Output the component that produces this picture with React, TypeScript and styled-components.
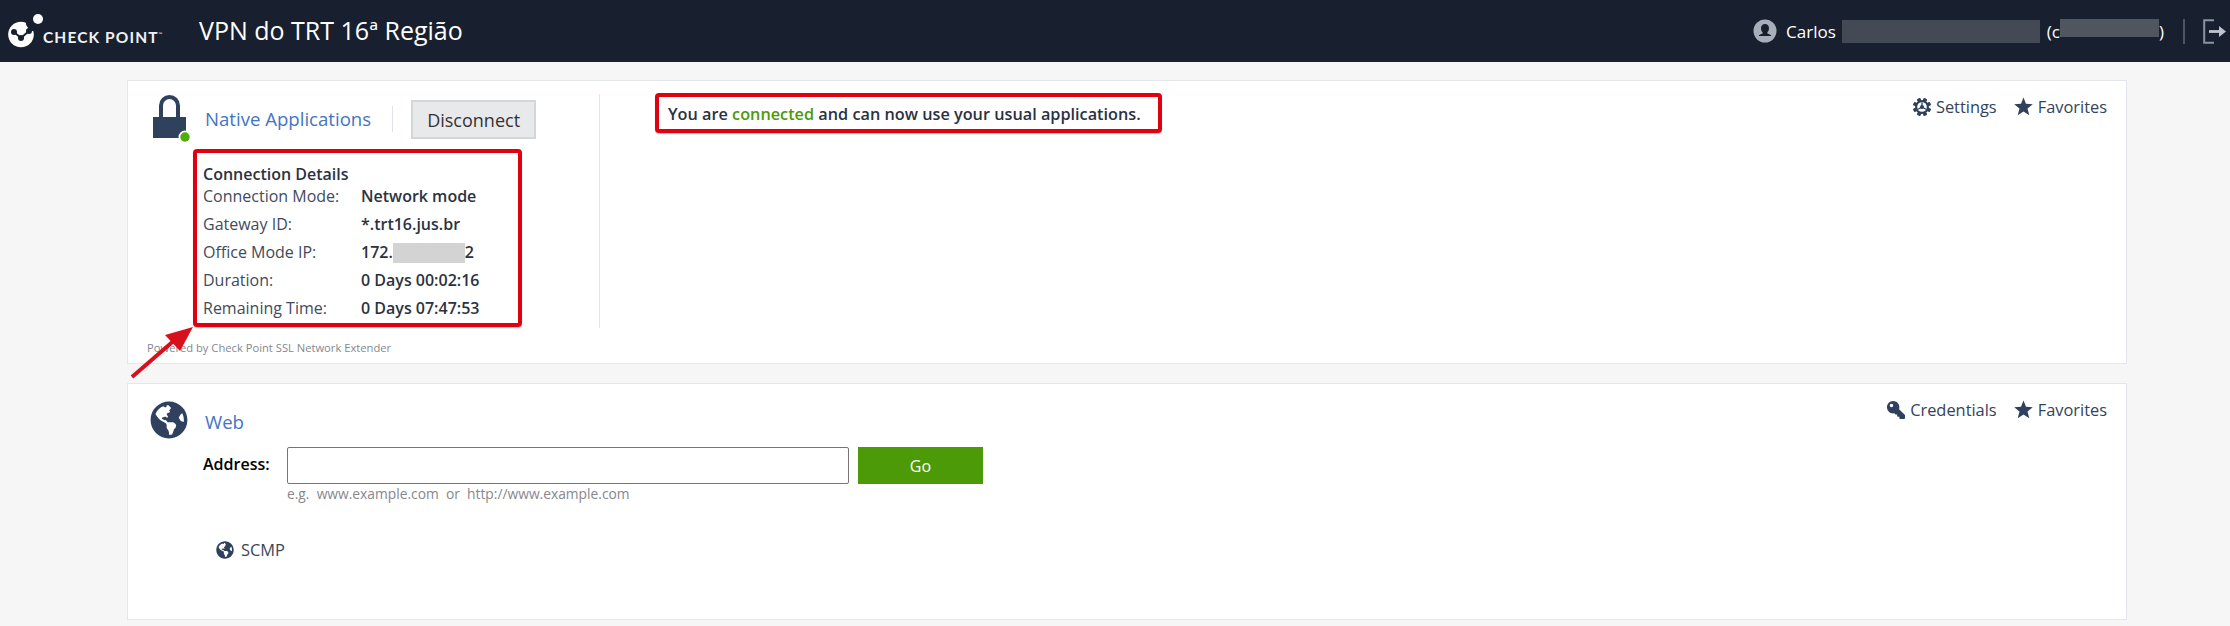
import React from "react";
import styled, { createGlobalStyle } from "styled-components";
import { FaGlobeAmericas, FaKey } from "react-icons/fa";

const Global = createGlobalStyle`
  html, body { margin: 0; padding: 0; background: #f6f6f6; }
  body { font-family: "Open Sans", "Liberation Sans", sans-serif; color: #2b3240; }
  * { box-sizing: border-box; }
`;

const Page = styled.div`
  width: 2230px;
  height: 626px;
  overflow: hidden;
  position: relative;
  background: #f6f6f6;
`;

const Header = styled.header`
  height: 62px;
  background: #18202f;
  display: flex;
  align-items: center;
  padding: 0 4px 0 8px;
  color: #fff;
`;

const Brand = styled.div`
  display: flex;
  align-items: center;
  width: 191px;
`;

const BrandName = styled.span`
  font-family: "Lato", "Open Sans", sans-serif;
  font-weight: 700;
  font-size: 15.5px;
  letter-spacing: 1.1px;
  margin: 11px 0 0 -1px;
  color: #f2f2f2;
  white-space: nowrap;
`;

const BrandMark = styled.sup`
  font-size: 5px;
  font-weight: 400;
  letter-spacing: 0;
  vertical-align: 7px;
  line-height: 0;
`;

const Title = styled.h1`
  margin: 0 auto 2px 0;
  font-size: 25px;
  font-weight: 400;
  white-space: nowrap;
`;

const User = styled.div`
  display: flex;
  align-items: center;
  font-size: 17px;
  white-space: nowrap;
`;

const UserName = styled.span`
  margin-left: 9px;
`;

const Paren = styled.span<{ $ml?: number }>`
  margin-left: ${(p) => p.$ml ?? 0}px;
`;

const Smudge = styled.span<{ $w: number; $h: number; $up?: number; $ml?: number; $bg: string }>`
  display: inline-block;
  width: ${(p) => p.$w}px;
  height: ${(p) => p.$h}px;
  background: ${(p) => p.$bg};
  vertical-align: middle;
  margin-top: ${(p) => -(p.$up ?? 0)}px;
  margin-left: ${(p) => p.$ml ?? 0}px;
`;

const HeaderSep = styled.span`
  width: 2px;
  height: 25px;
  background: #4d5563;
  margin: 0 18px 0 19px;
`;

const Main = styled.main`
  padding: 18px 103px 0 127px;
  display: flex;
  flex-direction: column;
  gap: 19px;
`;

const Card = styled.section<{ $h: number }>`
  height: ${(p) => p.$h}px;
  background: #fff;
  border: 1px solid #e3e6ec;
  display: flex;
  position: relative;
`;

const LeftColumn = styled.div`
  width: 472px;
  padding: 14px 0 0 24px;
  display: flex;
  flex-direction: column;
`;

const TitleRow = styled.div`
  display: flex;
  align-items: flex-start;
  height: 54px;
`;

const LockWrap = styled.div`
  width: 53px;
  flex: none;
`;

const SectionName = styled.h2`
  margin: 0;
  font-size: 18.6px;
  font-weight: 400;
  color: #4474c4;
  line-height: 24px;
  white-space: nowrap;
`;

const NativeName = styled(SectionName)`
  margin-top: 12px;
  padding-right: 21px;
`;

const TitleSep = styled.span`
  width: 1px;
  height: 26px;
  margin: 11px 18px 0 0;
  background: #dfe2e7;
`;

const Disconnect = styled.button`
  width: 125px;
  height: 39px;
  margin-top: 5px;
  background: #e8e9eb;
  border: 2px solid #d3d6db;
  font: 400 18px "Open Sans", sans-serif;
  color: #333;
  padding: 0;
`;

const DetailsBox = styled.div`
  width: 329px;
  height: 178px;
  margin-left: 41px;
  border: 4px solid #e0000f;
  border-radius: 4px;
  padding: 11px 0 0 6px;
  box-shadow: 0 1px 1px rgba(0, 0, 0, 0.25);
`;

const DetailsTitle = styled.div`
  font-size: 16px;
  font-weight: 600;
  line-height: 20px;
  color: #2b3240;
`;

const DetailRow = styled.div`
  display: grid;
  grid-template-columns: 158px auto;
  height: 28px;
  align-items: center;
  font-size: 16px;
  white-space: nowrap;
`;

const DetailsGrid = styled.div`
  display: flex;
  flex-direction: column;
  margin-top: -2px;
`;

const DetailLabel = styled.span`
  color: #414b5c;
`;

const DetailValue = styled.span`
  font-weight: 600;
  color: #2b3240;
`;

const Powered = styled.div`
  font-size: 11.2px;
  color: #85888e;
  margin: 13px 0 0 -5px;
  line-height: 15px;
  white-space: nowrap;
`;

const VSep = styled.div`
  position: absolute;
  left: 471px;
  top: 13px;
  width: 1px;
  height: 234px;
  background: #e3e6ec;
`;

const StatusColumn = styled.div`
  flex: 1;
  padding: 12px 0 0 55px;
`;

const StatusBox = styled.div`
  display: inline-block;
  width: 507px;
  height: 40px;
  border: 4px solid #e0000f;
  border-radius: 4px;
  padding: 0 0 0 9px;
  line-height: 34px;
  font-size: 16.25px;
  font-weight: 600;
  color: #2b3240;
  white-space: nowrap;
  box-shadow: 0 1px 1px rgba(0, 0, 0, 0.25);
`;

const Connected = styled.span`
  color: #4c9a08;
`;

const Actions = styled.div`
  display: flex;
  gap: 17px;
  padding: 12px 19px 0 0;
  height: 39px;
  align-items: center;
  font-size: 16.4px;
  color: #34435c;
  white-space: nowrap;
`;

const Action = styled.span`
  display: flex;
  align-items: center;
  gap: 5px;
  svg { color: #2f415c; flex: none; }
`;

const FlippedKey = styled(FaKey)`
  transform: scaleX(-1);
`;

const WebBody = styled.div`
  flex: 1;
  padding: 17px 0 0 22px;
  display: flex;
  flex-direction: column;
`;

const WebTitleRow = styled.div`
  display: flex;
  align-items: flex-start;
  height: 46px;
`;

const WebIcon = styled.div`
  width: 55px;
  color: #2f415c;
  flex: none;
`;

const WebName = styled(SectionName)`
  margin-top: 9px;
`;

const AddressRow = styled.div`
  display: flex;
  align-items: center;
  padding-left: 53px;
`;

const AddressLabel = styled.label`
  width: 84px;
  padding-bottom: 3px;
  font-size: 16px;
  font-weight: 600;
  color: #000;
`;

const AddressInput = styled.input`
  width: 562px;
  height: 37px;
  border: 1px solid #767676;
  border-radius: 2px;
  background: #fff;
`;

const Go = styled.button`
  width: 125px;
  height: 37px;
  margin-left: 9px;
  background: #4c9a08;
  border: 0;
  color: #fff;
  font: 400 16px "Open Sans", sans-serif;
`;

const Hint = styled.div`
  margin: 1px 0 0 137px;
  font-size: 13.8px;
  line-height: 18px;
  color: #85888e;
  white-space: pre;
`;

const Bookmark = styled.div`
  display: flex;
  align-items: center;
  gap: 7px;
  margin: 35px 0 0 66px;
  font-size: 16.4px;
  color: #3c4656;
  svg { color: #2f415c; }
`;

const Arrow = styled.svg`
  position: absolute;
  left: 125px;
  top: 320px;
`;

const Logo = () => (
  <svg width="36" height="36" viewBox="0 0 36 36" aria-hidden>
    <circle cx="13" cy="21.500" r="12.800" fill="#fff" />
    <circle cx="27.500" cy="8.500" r="10" fill="#18202f" />
    <circle cx="30" cy="6" r="5" fill="#fff" />
    <path d="M6 19l7 6 8-7" fill="none" stroke="#18202f" strokeWidth="2" />
    <circle cx="6" cy="19" r="3" fill="#18202f" />
    <circle cx="13" cy="25" r="3" fill="#18202f" />
    <circle cx="21" cy="18" r="3" fill="#18202f" />
  </svg>
);

const Lock = () => (
  <svg width="38" height="48" viewBox="0 0 38 48" aria-hidden>
    <path d="M9 24V10.500a8.500 8.500 0 0 1 17 0V24" fill="none" stroke="#2f415c" strokeWidth="4" />
    <rect x="1" y="22" width="33" height="21" fill="#2f415c" />
    <circle cx="33" cy="42" r="6.500" fill="#fff" />
    <circle cx="33" cy="42" r="4.700" fill="#4fae0c" />
  </svg>
);

const Avatar = () => (
  <svg width="24" height="24" viewBox="0 0 24 24" aria-hidden>
    <circle cx="12" cy="12" r="11.500" fill="#a8adba" />
    <path fill="#18202f" d="M12 5c-2.600 0-4 1.900-4 4.300 0 1.600.6 3 1.600 3.900v1.300c-1.600.6-3.600 1.200-4 2.500h12.800c-.4-1.300-2.400-1.900-4-2.500v-1.300c1-.9 1.600-2.300 1.600-3.900C16 6.900 14.600 5 12 5Z" />
  </svg>
);

const Logout = () => (
  <svg width="23" height="25" viewBox="0 0 23 25" fill="none" aria-hidden>
    <path d="M11 1.200H1.200v22.600H11" stroke="#8a93a3" strokeWidth="2" />
    <path d="M6 12.500h12" stroke="#c0c4cc" strokeWidth="2.800" />
    <path d="M16 7l7 5.500-7 5.500z" fill="#c0c4cc" />
  </svg>
);

const Star = () => (
  <svg width="19" height="19" viewBox="0 0 20 19" aria-hidden>
    <path fill="currentColor" d="M10 0l2.600 6.700 7.200.4-5.600 4.500 1.900 7L10 14.700l-6.100 3.900 1.900-7L.2 7.100l7.200-.4z" />
  </svg>
);

const Gear = () => (
  <svg width="18" height="18" viewBox="0 0 18 18" aria-hidden>
    <g fill="currentColor">
      {[0, 45, 90, 135, 180, 225, 270, 315].map((a) => (
        <rect key={a} x="7.300" y="0" width="3.400" height="18" rx="0.600" transform={`rotate(${a + 22.5} 9 9)`} />
      ))}
    </g>
    <circle cx="9" cy="9" r="7" fill="currentColor" />
    <circle cx="9" cy="9" r="4.800" fill="#fff" />
    <circle cx="9" cy="9" r="2" fill="currentColor" />
    <path d="M9 9V4.500M9 9l-3.900 2.300M9 9l3.900 2.300" stroke="currentColor" strokeWidth="1.300" />
  </svg>
);

export default function App() {
  return (
    <Page>
      <Global />
      <Header>
        <Brand>
          <Logo />
          <BrandName>
            CHECK POINT<BrandMark>™</BrandMark>
          </BrandName>
        </Brand>
        <Title>VPN do TRT 16ª Região</Title>
        <User>
          <Avatar />
          <UserName>Carlos</UserName>
          <Smudge $w={198} $h={23} $ml={6} $bg="#434a55" />
          <Paren $ml={7}>(c</Paren>
          <Smudge $w={99} $h={18} $up={6} $bg="#50565f" />
          <Paren>)</Paren>
        </User>
        <HeaderSep />
        <Logout />
      </Header>
      <Main>
        <Card $h={284}>
          <LeftColumn>
            <TitleRow>
              <LockWrap>
                <Lock />
              </LockWrap>
              <NativeName>Native Applications</NativeName>
              <TitleSep />
              <Disconnect>Disconnect</Disconnect>
            </TitleRow>
            <DetailsBox>
              <DetailsTitle>Connection Details</DetailsTitle>
              <DetailsGrid>
                <DetailRow>
                  <DetailLabel>Connection Mode:</DetailLabel>
                  <DetailValue>Network mode</DetailValue>
                </DetailRow>
                <DetailRow>
                  <DetailLabel>Gateway ID:</DetailLabel>
                  <DetailValue>*.trt16.jus.br</DetailValue>
                </DetailRow>
                <DetailRow>
                  <DetailLabel>Office Mode IP:</DetailLabel>
                  <DetailValue>
                    172.
                    <Smudge $w={72} $h={20} $bg="#d3d3d3" />
                    2
                  </DetailValue>
                </DetailRow>
                <DetailRow>
                  <DetailLabel>Duration:</DetailLabel>
                  <DetailValue>0 Days 00:02:16</DetailValue>
                </DetailRow>
                <DetailRow>
                  <DetailLabel>Remaining Time:</DetailLabel>
                  <DetailValue>0 Days 07:47:53</DetailValue>
                </DetailRow>
              </DetailsGrid>
            </DetailsBox>
            <Powered>Powered by Check Point SSL Network Extender</Powered>
          </LeftColumn>
          <VSep />
          <StatusColumn>
            <StatusBox>
              You are <Connected>connected</Connected> and can now use your usual applications.
            </StatusBox>
          </StatusColumn>
          <Actions>
            <Action>
              <Gear />
              Settings
            </Action>
            <Action>
              <Star />
              Favorites
            </Action>
          </Actions>
        </Card>
        <Card $h={237}>
          <WebBody>
            <WebTitleRow>
              <WebIcon>
                <FaGlobeAmericas size={38} />
              </WebIcon>
              <WebName>Web</WebName>
            </WebTitleRow>
            <AddressRow>
              <AddressLabel>Address:</AddressLabel>
              <AddressInput />
              <Go>Go</Go>
            </AddressRow>
            <Hint>e.g.  www.example.com  or  http://www.example.com</Hint>
            <Bookmark>
              <FaGlobeAmericas size={18} />
              SCMP
            </Bookmark>
          </WebBody>
          <Actions>
            <Action>
              <FlippedKey size={18} />
              Credentials
            </Action>
            <Action>
              <Star />
              Favorites
            </Action>
          </Actions>
        </Card>
      </Main>
      <Arrow width="70" height="62" viewBox="0 0 70 62" aria-hidden>
        <path d="M7 57L52 18" stroke="#d8101c" strokeWidth="4" fill="none" />
        <path d="M68 7L40 15L55 31Z" fill="#d8101c" />
      </Arrow>
    </Page>
  );
}
